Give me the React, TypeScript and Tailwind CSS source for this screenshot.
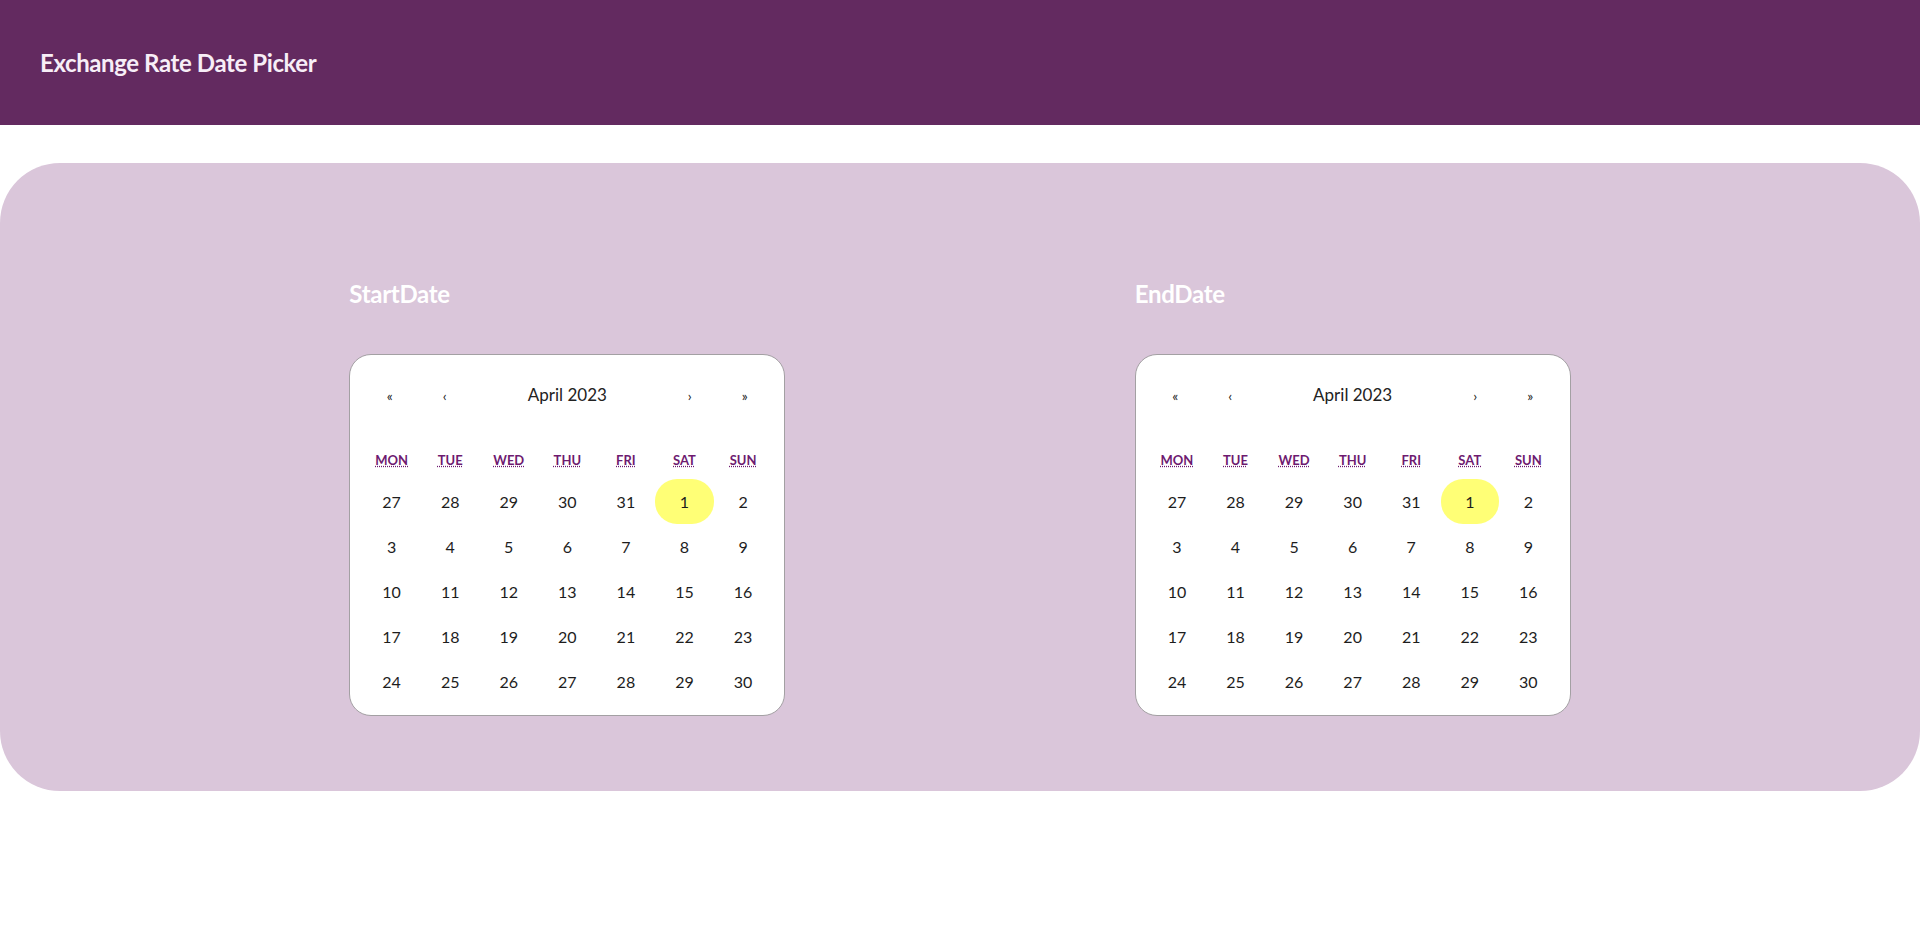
import React from "react";

const days: number[][] = [
  [27, 28, 29, 30, 31, 1, 2],
  [3, 4, 5, 6, 7, 8, 9],
  [10, 11, 12, 13, 14, 15, 16],
  [17, 18, 19, 20, 21, 22, 23],
  [24, 25, 26, 27, 28, 29, 30],
];
const weekdays = [
  ["MON", "Monday"],
  ["TUE", "Tuesday"],
  ["WED", "Wednesday"],
  ["THU", "Thursday"],
  ["FRI", "Friday"],
  ["SAT", "Saturday"],
  ["SUN", "Sunday"],
];

function Calendar() {
  return (
    <div className="w-[436px] bg-white border border-[#a3a0a3] rounded-[22px] px-3 pt-[18px] pb-[11px]">
      <div className="flex h-11 items-center text-[#222]">
        <button className="w-[55px] h-11 text-[14px]">«</button>
        <button className="w-[55px] h-11 text-[14px]">‹</button>
        <span className="flex-1 text-center text-[17px]">April 2023</span>
        <button className="w-[55px] h-11 text-[14px]">›</button>
        <button className="w-[55px] h-11 text-[14px]">»</button>
      </div>
      <div className="mt-8 grid grid-cols-7 h-6 items-center mb-[6px]">
        {weekdays.map(([a, t]) => (
          <div key={a} className="text-center text-[13px] font-bold text-[#6e1a70]">
            <abbr title={t} className="underline decoration-dotted">{a}</abbr>
          </div>
        ))}
      </div>
      <div className="grid grid-cols-7">
        {days.flat().map((d, i) => (
          <div
            key={i}
            className={
              i === 5
                ? "h-[45px] flex items-center justify-center text-base text-[#1d1d1d] bg-[#ffff76] rounded-[22px]"
                : "h-[45px] flex items-center justify-center text-base text-[#1d1d1d]"
            }
          >
            {d}
          </div>
        ))}
      </div>
    </div>
  );
}

function Section({ label }: { label: string }) {
  return (
    <div className="w-[436px]">
      <h2 className="text-2xl leading-8 font-bold tracking-[-0.3px] text-white">{label}</h2>
      <div className="mt-[44px]">
        <Calendar />
      </div>
    </div>
  );
}

export default function App() {
  return (
    <div
      className="min-h-screen bg-white"
      style={{ fontFamily: "Lato, 'Open Sans', sans-serif" }}
    >
      <header className="h-[125px] bg-[#632a60] flex items-center px-10">
        <h1 className="text-2xl font-bold tracking-[-0.4px] text-[#f7eef7]">Exchange Rate Date Picker</h1>
      </header>
      <main className="mt-[38px] bg-[#dac6da] rounded-[60px] pt-[115px] pb-[75px] flex justify-evenly">
        <Section label="StartDate" />
        <Section label="EndDate" />
      </main>
    </div>
  );
}
